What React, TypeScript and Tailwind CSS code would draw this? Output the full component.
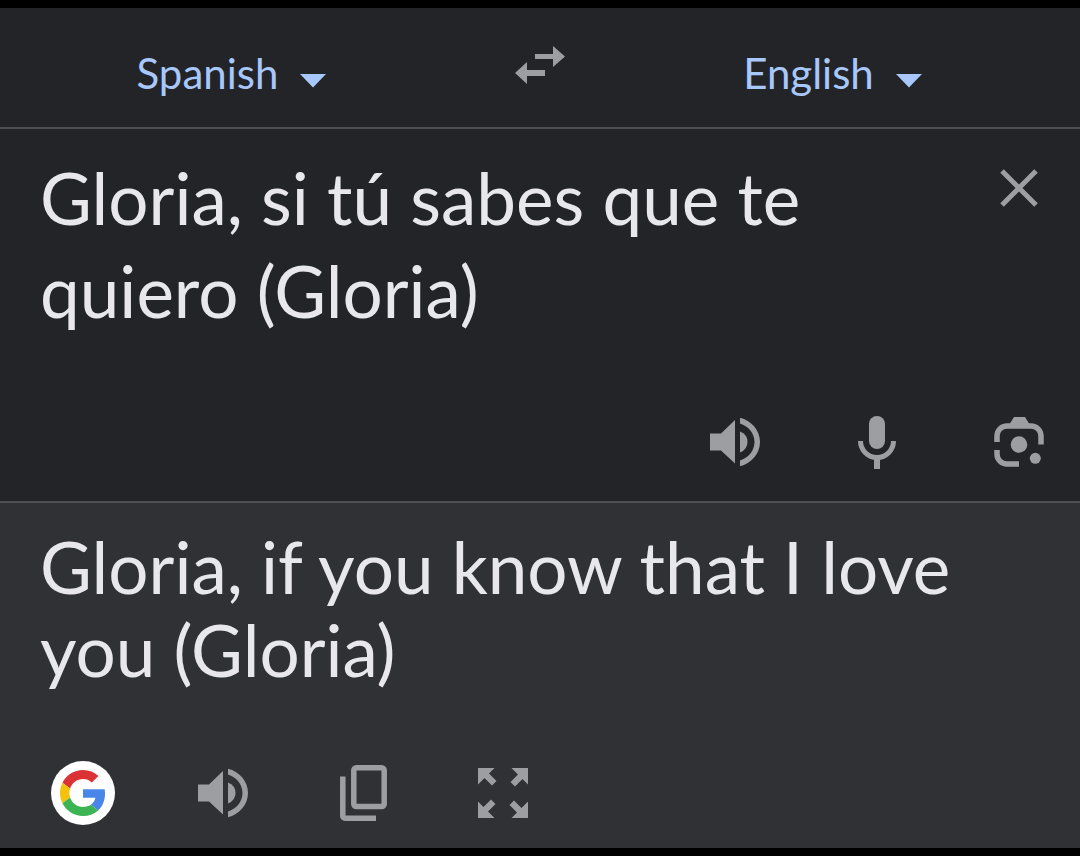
import { useState, type ReactNode } from 'react';

const languages = ['Spanish', 'English', 'French', 'German'];

function SwapIcon() {
  return (
    <svg width="50" height="38" viewBox="0 0 50 38" fill="currentColor" aria-hidden="true">
      <path d="M20 8h18V0l12 10.500L38 21v-8H20z" />
      <path d="M30 30H12v8L0 27l12-11v8h18z" />
    </svg>
  );
}

function CloseIcon() {
  return (
    <svg width="38" height="38" viewBox="0 0 38 38" stroke="currentColor" strokeWidth="5" aria-hidden="true">
      <path d="M2 2l34 34M36 2L2 36" />
    </svg>
  );
}

function SpeakerIcon() {
  return (
    <svg width="50" height="50" viewBox="0 0 50 50" fill="currentColor" aria-hidden="true">
      <path d="M0 16.500h11L25 3v43.500L11 33.500H0z" />
      <path d="M30 14.500q7.500 3 7.500 10.500T30 35.500z" />
      <path d="M30 .8C41 3.500 50 13 50 25S41 46.500 30 49.200v-5.700C38 41 44.500 34 44.500 25S38 9 30 6.500z" />
    </svg>
  );
}

function MicIcon() {
  return (
    <svg width="38" height="53" viewBox="0 0 38 53" fill="currentColor" aria-hidden="true">
      <rect x="11" width="16" height="33" rx="8" />
      <path d="M2.500 25a16.500 16.500 0 0 0 33 0" fill="none" stroke="currentColor" strokeWidth="5" />
      <rect x="16" y="42" width="6" height="11" />
    </svg>
  );
}

function LensIcon() {
  return (
    <svg width="50" height="50" viewBox="0 0 50 50" fill="currentColor" aria-hidden="true">
      <path d="M15 8l5-8h11l5 8z" />
      <path
        d="M3 25v-6a10 10 0 0 1 10-10h24a10 10 0 0 1 10 10v8.500M3 33v4a10 10 0 0 0 10 10h12"
        fill="none"
        stroke="currentColor"
        strokeWidth="5.500"
      />
      <circle cx="25" cy="27.500" r="8.300" />
      <circle cx="41.300" cy="41.300" r="5.500" />
    </svg>
  );
}

function CopyIcon() {
  return (
    <svg width="47" height="56" viewBox="0 0 47 56" fill="none" stroke="currentColor" strokeWidth="5.500" aria-hidden="true">
      <rect x="13.800" y="2.800" width="30.400" height="38.800" rx="2.500" />
      <path d="M2.800 11.500V51a2.200 2.200 0 0 0 2.200 2.200h31" />
    </svg>
  );
}

function ExpandIcon() {
  const arrow = 'M0 0h16.500l-5.500 5.500 7.500 7.500-4.500 4.500-7.500-7.500L0 16.500z';
  return (
    <svg width="50" height="50" viewBox="0 0 50 50" fill="currentColor" aria-hidden="true">
      <path d={arrow} />
      <path d={arrow} transform="rotate(90 25 25)" />
      <path d={arrow} transform="rotate(180 25 25)" />
      <path d={arrow} transform="rotate(270 25 25)" />
    </svg>
  );
}

function GoogleIcon() {
  return (
    <svg width="46" height="46" viewBox="0 0 48 48" aria-hidden="true">
      <path fill="#db3236" d="M24 9.500c3.540 0 6.710 1.220 9.210 3.600l6.850-6.850C35.900 2.380 30.470 0 24 0 14.620 0 6.510 5.380 2.560 13.220l7.980 6.190C12.430 13.720 17.740 9.500 24 9.500z" />
      <path fill="#4a86e8" d="M46.980 24.550c0-1.570-.15-3.090-.38-4.550H24v9.020h12.940c-.58 2.960-2.260 5.480-4.780 7.180l7.730 6c4.510-4.180 7.090-10.360 7.090-17.650z" />
      <path fill="#f4c20d" d="M10.530 28.590c-.48-1.450-.76-2.990-.76-4.590s.27-3.140.76-4.590l-7.980-6.190C.92 16.460 0 20.120 0 24c0 3.880.92 7.540 2.560 10.780l7.970-6.190z" />
      <path fill="#3cb454" d="M24 48c6.480 0 11.930-2.130 15.890-5.810l-7.730-6c-2.150 1.450-4.920 2.300-8.160 2.300-6.260 0-11.570-4.220-13.470-9.910l-7.980 6.190C6.510 42.620 14.620 48 24 48z" />
    </svg>
  );
}

function IconButton({ label, children }: { label: string; children: ReactNode }) {
  return (
    <button type="button" aria-label={label} className="flex h-16 min-w-16 items-center justify-center">
      {children}
    </button>
  );
}

type LanguageSelectProps = {
  label: string;
  value: string;
  onChange: (value: string) => void;
};

function LanguageSelect({ label, value, onChange }: LanguageSelectProps) {
  return (
    <label className="flex items-center gap-[22px] text-[#a8c7fa]">
      <select
        aria-label={label}
        value={value}
        onChange={(e) => onChange(e.target.value)}
        className="field-sizing-content appearance-none bg-transparent text-[42px] leading-[52px] outline-none"
      >
        {languages.map((language) => (
          <option key={language}>{language}</option>
        ))}
      </select>
      <svg width="26" height="14" viewBox="0 0 26 14" className="mt-4" fill="currentColor" aria-hidden="true">
        <path d="M0 0h26L13 13.500z" />
      </svg>
    </label>
  );
}

export default function App() {
  const [from, setFrom] = useState('Spanish');
  const [to, setTo] = useState('English');
  const [text, setText] = useState('Gloria, si tú sabes que te quiero (Gloria)');

  const swap = () => {
    setFrom(to);
    setTo(from);
  };

  return (
    <div className="flex min-h-screen flex-col border-y-8 border-black bg-[#303135] font-['Lato','Open_Sans',sans-serif] text-[#9d9ea2]">
      <header className="grid grid-cols-[1fr_auto_1fr] items-center border-b-2 border-[#4e4f53] bg-[#232428] pt-[38px] pb-[27px]">
        <div className="flex justify-center pr-[52px]">
          <LanguageSelect label="Source language" value={from} onChange={setFrom} />
        </div>
        <button type="button" aria-label="Swap languages" onClick={swap} className="pb-4">
          <SwapIcon />
        </button>
        <div className="flex justify-center pl-5">
          <LanguageSelect label="Target language" value={to} onChange={setTo} />
        </div>
      </header>

      <main className="flex flex-1 flex-col">
        <section className="border-b-2 border-[#4e4f53] bg-[#232428] pt-[22px] pb-[27px]">
          <div className="flex items-start gap-10 pr-[42px] pl-10">
            <textarea
              aria-label="Source text"
              rows={2}
              value={text}
              onChange={(e) => setText(e.target.value)}
              className="block flex-1 resize-none overflow-hidden bg-transparent text-[71px] leading-[93px] text-[#e8e8ec] outline-none"
            />
            <button type="button" aria-label="Clear text" onClick={() => setText('')} className="pt-[18px]">
              <CloseIcon />
            </button>
          </div>
          <div className="flex justify-end gap-[78px] pt-[73px] pr-[29px]">
            <IconButton label="Listen to source text">
              <SpeakerIcon />
            </IconButton>
            <IconButton label="Speak">
              <MicIcon />
            </IconButton>
            <IconButton label="Translate with camera">
              <LensIcon />
            </IconButton>
          </div>
        </section>

        <section className="flex flex-1 flex-col justify-between pt-[22px] pb-[23px]">
          <p className="px-10 text-[71px] leading-[83px] text-[#e8e8ec]">
            Gloria, if you know that I love you (Gloria)
          </p>
          <div className="flex items-center gap-[76px] pl-[51px]">
            <a href="#google" aria-label="Google" className="flex h-16 w-16 items-center justify-center rounded-full bg-white">
              <GoogleIcon />
            </a>
            <IconButton label="Listen to translation">
              <SpeakerIcon />
            </IconButton>
            <IconButton label="Copy translation">
              <CopyIcon />
            </IconButton>
            <IconButton label="Full screen">
              <ExpandIcon />
            </IconButton>
          </div>
        </section>
      </main>
    </div>
  );
}
